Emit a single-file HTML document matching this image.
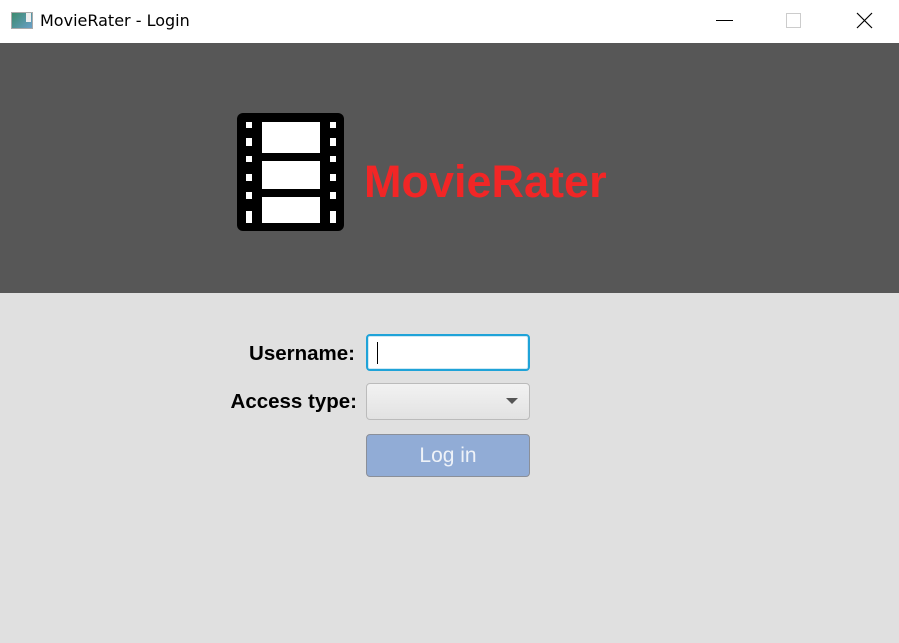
<!DOCTYPE html>
<html><head><style>
body{margin:0;width:899px;height:643px;overflow:hidden;font-family:"Liberation Sans",sans-serif;background:#e0e0e0;position:relative}
.tb{position:absolute;left:0;top:0;width:899px;height:43px;background:#fff}
.hdr{position:absolute;left:0;top:43px;width:899px;height:250px;background:#575757}
.a{position:absolute}
</style></head><body>
<div class="tb">
 <div class="a" style="left:11px;top:12px;width:20px;height:15px;border:1px solid #aaa;background:linear-gradient(135deg,#3c8a6e,#6aa0c8)"></div>
 <div class="a" style="left:26px;top:13px;width:5px;height:9px;background:#eee"></div>
 <div class="a" style="left:40px;top:11px;font-family:'DejaVu Sans',sans-serif;font-size:16px;color:#000">MovieRater - Login</div>
 <div class="a" style="left:716px;top:20px;width:17px;height:1px;background:#000"></div>
 <div class="a" style="left:786px;top:13px;width:13px;height:13px;border:1px solid #ccc"></div>
 <svg class="a" style="left:856px;top:12px" width="17" height="17"><path d="M1 1L16 16M16 1L1 16" stroke="#000" stroke-width="1.2"/></svg>
</div>
<div class="hdr"></div>
<svg class="a" style="left:237px;top:113px" width="108" height="119">
 <rect x="0" y="0" width="107" height="118" rx="6" fill="#000"/>
 <g fill="#fff">
 <rect x="25" y="9" width="58" height="31"/><rect x="25" y="48" width="58" height="28"/><rect x="25" y="84" width="58" height="26"/>
 <rect x="9" y="9" width="6" height="6"/><rect x="9" y="25" width="6" height="8"/><rect x="9" y="43" width="6" height="6"/><rect x="9" y="61" width="6" height="7"/><rect x="9" y="79" width="6" height="7"/><rect x="9" y="98" width="6" height="12"/>
 <rect x="93" y="9" width="6" height="6"/><rect x="93" y="25" width="6" height="8"/><rect x="93" y="43" width="6" height="6"/><rect x="93" y="61" width="6" height="7"/><rect x="93" y="79" width="6" height="7"/><rect x="93" y="98" width="6" height="12"/>
 </g>
</svg>
<div class="a" style="left:364px;top:156px;font-size:45px;font-weight:bold;color:#f22626;line-height:52px">MovieRater</div>
<div class="a" style="left:150px;width:205px;top:342px;text-align:right;font-size:20.5px;font-weight:bold">Username:</div>
<div class="a" style="left:150px;width:207px;top:390px;text-align:right;font-size:20.5px;font-weight:bold">Access type:</div>
<div class="a" style="left:366px;top:334px;border:2px solid #1fa3d8;border-radius:4px;background:#fff;width:160px;height:33px;box-shadow:inset 0 0 0 1px #cfe9f5"></div>
<div class="a" style="left:377px;top:342px;width:1px;height:22px;background:#000"></div>
<div class="a" style="left:366px;top:383px;width:162px;height:35px;border:1px solid #bbb;border-radius:4px;background:linear-gradient(#f2f2f2,#e2e2e2)"></div>
<svg class="a" style="left:506px;top:398px" width="12" height="7"><path d="M0 0H12L6 6Z" fill="#555"/></svg>
<div class="a" style="left:366px;top:434px;width:162px;height:41px;border:1px solid #8a8f99;border-radius:4px;background:#91acd6;color:#eef2f8;font-size:21px;text-align:center;line-height:41px;font-family:'Liberation Sans',sans-serif">Log in</div>
</body></html>
